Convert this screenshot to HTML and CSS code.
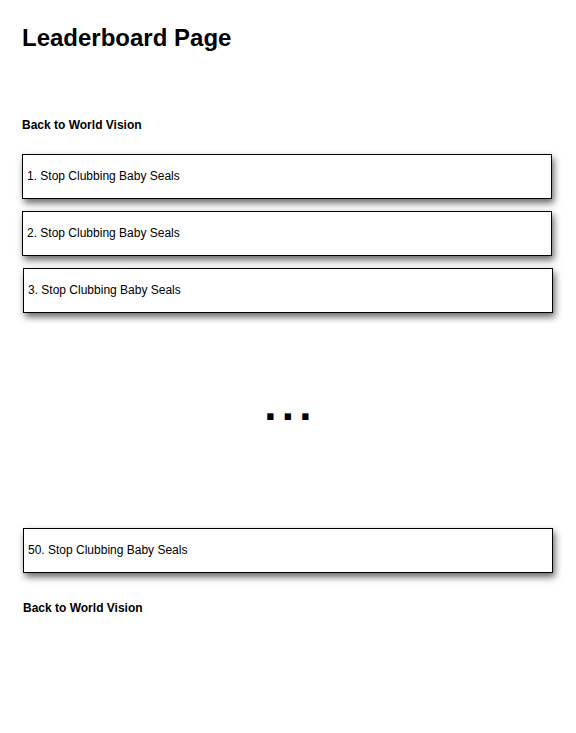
FILE: index.html
```html
<!DOCTYPE html>
<html lang="en">
<head>
<meta charset="utf-8">
<title>Leaderboard Page</title>
<link rel="stylesheet" href="styles.css">
</head>
<body>
<div class="page">
  <h1 class="title">Leaderboard Page</h1>
  <a class="back back-top" href="#">Back to World Vision</a>
  <ol class="board">
    <li class="entry">1. Stop Clubbing Baby Seals</li>
    <li class="entry">2. Stop Clubbing Baby Seals</li>
    <li class="entry nudge">3. Stop Clubbing Baby Seals</li>
  </ol>
  <div class="ellipsis">...</div>
  <ol class="board">
    <li class="entry nudge">50. Stop Clubbing Baby Seals</li>
  </ol>
  <a class="back back-bottom nudge" href="#">Back to World Vision</a>
</div>
</body>
</html>
```

FILE: styles.css
```css
html, body {
  margin: 0;
  padding: 0;
  background: #fff;
}

body {
  font-family: "Liberation Sans", Arial, Helvetica, sans-serif;
  color: #000;
}

.page {
  display: flex;
  flex-direction: column;
  align-items: stretch;
  padding: 24px 22px 40px 22px;
  width: 576px;
  box-sizing: border-box;
}

.title {
  margin: 0;
  font-size: 24px;
  line-height: 28px;
  font-weight: bold;
}

.back {
  display: block;
  font-size: 12px;
  line-height: 14px;
  font-weight: bold;
  color: #000;
  text-decoration: none;
}

.back-top {
  margin-top: 66px;
}

.back-bottom {
  margin-top: 28px;
}

.board {
  list-style: none;
  margin: 0;
  padding: 0;
  display: flex;
  flex-direction: column;
  gap: 12px;
}

.back-top + .board {
  margin-top: 22px;
}

.entry {
  width: 530px;
  height: 45px;
  box-sizing: border-box;
  border: 1px solid #000;
  background: #fff;
  display: flex;
  align-items: center;
  padding-left: 4px;
  padding-bottom: 1px;
  font-size: 12px;
  box-shadow: 2px 4px 7px rgba(0, 0, 0, 0.6);
}

.nudge {
  margin-left: 1px;
}

.ellipsis {
  margin: 70px -22px 101px -22px;
  height: 44px;
  font-size: 44px;
  line-height: 44px;
  font-weight: bold;
  text-align: center;
  letter-spacing: 5.3px;
  padding-left: 5px;
}
```
